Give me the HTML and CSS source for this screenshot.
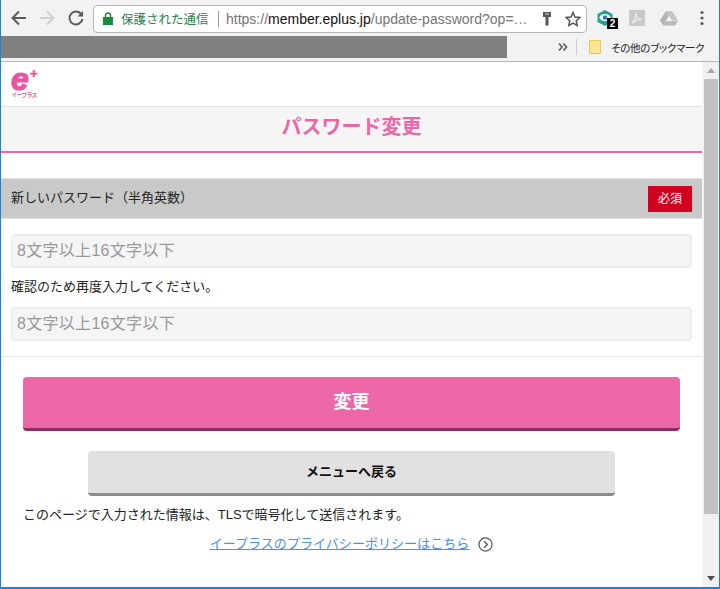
FILE: index.html
```html
<!DOCTYPE html>
<html lang="ja">
<head>
<meta charset="utf-8">
<title>パスワード変更</title>
<link rel="stylesheet" href="styles.css">
</head>
<body>
<div class="window">
  <div class="toolbar">
    <svg class="nav" width="18" height="18" viewBox="0 0 18 18"><path d="M16 9H3M9 2.500 2.500 9 9 15.500" fill="none" stroke="#5a5a5a" stroke-width="2"/></svg>
    <svg class="nav" width="18" height="18" viewBox="0 0 18 18"><path d="M2 9h13M9 2.500 15.500 9 9 15.500" fill="none" stroke="#cfcfcf" stroke-width="2"/></svg>
    <svg class="nav" width="18" height="18" viewBox="0 0 18 18"><path d="M14.300 5.200A6.500 6.500 0 1 0 15.400 10" fill="none" stroke="#5a5a5a" stroke-width="2"/><path d="M10.500 7.500H16V2z" fill="#5a5a5a"/></svg>
    <div class="omnibox">
      <svg class="lock" width="10" height="13" viewBox="0 0 10 13"><path d="M0 5h10v8H0z" fill="#1e8a3c"/><path d="M2.500 5.500V3.500a2.500 2.500 0 0 1 5 0v2" fill="none" stroke="#1e8a3c" stroke-width="1.500"/></svg>
      <span class="secure">保護された通信</span>
      <span class="sep"></span>
      <span class="url"><span class="url-dim">https://</span><span class="url-host">member.eplus.jp</span><span class="url-dim">/update-password?op=…</span></span>
      <svg class="key" width="10" height="16" viewBox="0 0 10 16"><path d="M1 1h8v5H6.500v8L5 15l-1.500-1V6H1z" fill="#555"/><path d="M3 3h4" stroke="#ddd"/></svg>
      <svg class="star" width="16" height="16" viewBox="0 0 16 16"><path d="M8 1.500l2 4.500 4.800.5-3.600 3.200 1 4.800L8 12.100l-4.200 2.400 1-4.800L1.200 6.500 6 6z" fill="none" stroke="#555" stroke-width="1.500"/></svg>
    </div>
    <div class="extensions">
      <div class="ext-eye">
        <svg width="18" height="18" viewBox="0 0 18 18"><path d="M9 1l7.500 4v8L9 17l-7.500-4V5z" fill="#21a58a"/><ellipse cx="9" cy="8.500" rx="5.500" ry="3.500" fill="#fff"/><circle cx="9" cy="8.500" r="2.200" fill="#2a7ab8"/></svg>
        <span class="badge">2</span>
      </div>
      <svg class="ext" width="16" height="16" viewBox="0 0 16 16"><path d="M0 0h16v16H0z" fill="#c9c9c9"/><path d="M3 13c3-2 4-6 3.500-10 .5 4 3 6.500 6.500 6.500-3.500 0-6.500 1-10 3.500z" fill="none" stroke="#f1f1f1" stroke-width="1.200"/></svg>
      <svg class="ext" width="18" height="16" viewBox="0 0 18 16"><path d="M6 1h6l6 9.500h-6z" fill="#c4c4c4"/><path d="M6 1 0 10.500l3 5 6-10z" fill="#b4b4b4"/><path d="M5.500 11H18l-3 4.500H3z" fill="#bababa"/></svg>
      <svg class="menu" width="4" height="16" viewBox="0 0 4 16"><circle cx="2" cy="2.500" r="1.600" fill="#5a5a5a"/><circle cx="2" cy="8" r="1.600" fill="#5a5a5a"/><circle cx="2" cy="13.500" r="1.600" fill="#5a5a5a"/></svg>
    </div>
  </div>
  <div class="bookmarks">
    <div class="redacted"></div>
    <svg class="chevrons" width="10" height="8" viewBox="0 0 10 8"><path d="M1 .500 4 4 1 7.500M5.500 .500 8.500 4 5.500 7.500" fill="none" stroke="#666" stroke-width="1.800"/></svg>
    <span class="bm-sep"></span>
    <svg class="folder" width="12" height="14" viewBox="0 0 12 14"><path d="M.500.500h11v13H.500z" fill="#fbe594" stroke="#edc94f"/></svg>
    <span class="bm-label">その他のブックマーク</span>
  </div>
  <div class="viewport">
    <main class="page">
      <header class="brand">
        <div class="logo"><div class="logo-mark"><span class="logo-e">e</span><span class="logo-plus">+</span></div><div class="logo-kana">イープラス</div></div>
      </header>
      <h1 class="title">パスワード変更</h1>
      <section class="form">
        <div class="field-head"><span class="field-label">新しいパスワード（半角英数）</span><span class="required">必須</span></div>
        <div class="fields">
          <input class="input" type="password" placeholder="8文字以上16文字以下">
          <p class="hint">確認のため再度入力してください。</p>
          <input class="input" type="password" placeholder="8文字以上16文字以下">
        </div>
      </section>
      <div class="actions">
        <button class="btn-primary" type="button">変更</button>
        <button class="btn-secondary" type="button">メニューへ戻る</button>
      </div>
      <p class="notice">このページで入力された情報は、TLSで暗号化して送信されます。</p>
      <p class="privacy"><a href="#">イープラスのプライバシーポリシーはこちら</a><svg class="arrow" width="15" height="15" viewBox="0 0 16 16"><circle cx="8" cy="8" r="7" fill="none" stroke="#555" stroke-width="1.300"/><path d="M6.500 4.500 10 8l-3.500 3.500" fill="none" stroke="#555" stroke-width="1.500"/></svg></p>
    </main>
    <div class="scrollbar">
      <span class="sb-up"></span>
      <div class="sb-track"><div class="sb-thumb"></div></div>
      <span class="sb-down"></span>
    </div>
  </div>
</div>
</body>
</html>
```
FILE: styles.css
```css
* { box-sizing: border-box; }
html, body { margin: 0; padding: 0; height: 589px; overflow: hidden; background: #fff; }
body { font-family: "Liberation Sans", "Noto Sans CJK JP", sans-serif; color: #222; }
.window { width: 720px; height: 589px; display: flex; flex-direction: column; border: solid #1585dc; border-width: 0 1px 2px 1px; }

.toolbar { height: 36px; background: #f2f2f2; display: flex; align-items: center; padding-left: 9px; flex: none; }
.nav { margin-right: 10px; flex: none; }
.nav:nth-child(2) { margin-right: 11px; }
.nav:nth-child(3) { margin-right: 8px; }
.omnibox { width: 494px; height: 28px; margin-top: 1px; background: #fff; border: 1px solid #b5b5b5; border-radius: 4px; display: flex; align-items: center; padding-left: 9px; font-size: 14px; white-space: nowrap; }
.lock { flex: none; margin-right: 8px; }
.secure { color: #2e7d4f; font-size: 12.500px; width: 87px; flex: none; }
.sep { width: 1px; height: 16px; background: #999; margin: 0 7px 0 10px; flex: none; }
.url { width: 312px; flex: none; overflow: hidden; font-size: 14px; }
.url-dim { color: #757575; }
.url-host { color: #111; }
.key { margin-left: 4px; flex: none; }
.star { margin-left: 13px; flex: none; }
.extensions { display: flex; align-items: center; margin-left: 9px; }
.ext-eye { position: relative; width: 18px; height: 18px; margin-right: 15px; }
.ext-eye svg { display: block; }
.badge { position: absolute; left: 11px; top: 9px; width: 11px; height: 11px; background: #000; color: #fff; font-size: 10px; font-weight: bold; line-height: 11px; text-align: center; }
.ext { margin-right: 15px; flex: none; }
.menu { margin-left: 7px; flex: none; }

.bookmarks { height: 26px; background: #f2f2f2; border-bottom: 1px solid #b8b8b8; display: flex; align-items: center; flex: none; padding-bottom: 3px; }
.redacted { width: 506px; height: 22px; background: #808080; margin-right: 51px; flex: none; align-self: flex-start; }
.chevrons { flex: none; margin-right: 8px; }
.bm-sep { width: 1px; height: 16px; background: #ccc; margin-right: 12px; flex: none; }
.folder { flex: none; margin-right: 10px; }
.bm-label { font-size: 10.500px; letter-spacing: -.3px; color: #222; white-space: nowrap; font-feature-settings: "palt"; }

.viewport { flex: 1; min-height: 0; display: flex; }
.page { flex: 1; min-width: 0; background: #fff; }
.brand { height: 45px; border-bottom: 1px solid #e3e3e3; padding: 6px 0 0 10px; }
.logo { width: 28px; color: #e8559f; font-weight: bold; }
.logo-mark { display: flex; align-items: flex-start; height: 23px; }
.logo-e { font-family: "Liberation Sans", sans-serif; font-style: italic; font-size: 32px; line-height: 23px; width: 19px; -webkit-text-stroke: 1.200px #e8559f; }
.logo-plus { font-size: 13px; line-height: 10px; margin-top: 1px; -webkit-text-stroke: .500px #e8559f; }
.logo-kana { font-size: 5.500px; line-height: 7px; margin: 1px 0 0 1px; white-space: nowrap; font-feature-settings: "palt"; }

.title { height: 46px; margin: 0; background: #f5f5f5; border-bottom: 2px solid #eb67a8; color: #eb67a8; font-size: 20px; font-weight: bold; line-height: 40px; text-align: center; }
.form { margin-top: 25px; border-bottom: 1px solid #e3e3e3; padding-bottom: 15px; }
.field-head { height: 41px; background: #c9c9c9; border: solid #e0e0e0; border-width: 1px 0; display: flex; align-items: center; justify-content: space-between; padding: 0 10px; font-size: 13px; color: #222; }
.field-label { margin-top: -4px; }
.required { width: 44px; height: 26px; background: #d0021f; color: #fff; font-size: 12px; line-height: 26px; text-align: center; }
.fields { padding: 15px 10px 0; }
.input { display: block; width: 100%; height: 34px; background: #f5f5f5; border: 2px solid #ededed; border-radius: 4px; padding: 0 4px; font: 16px "Liberation Sans", "Noto Sans CJK JP", sans-serif; outline: none; }
.input::placeholder { color: #999; opacity: 1; letter-spacing: .3px; }
.hint { margin: 9px 0 11px; font-size: 13px; line-height: 19px; color: #222; }

.actions { display: flex; flex-direction: column; align-items: center; padding-top: 20px; }
.btn-primary { display: block; width: 657px; height: 54px; background: #eb67a8; border: 0; border-bottom: 3px solid #8e2e5c; border-radius: 4px; color: #fff; font: bold 18px "Liberation Sans", "Noto Sans CJK JP", sans-serif; padding: 0 0 5px; }
.btn-secondary { display: block; width: 527px; height: 45px; margin-top: 20px; background: #e1e1e1; border: 0; border-bottom: 3px solid #8a8a8a; border-radius: 4px; color: #111; font: bold 13px "Liberation Sans", "Noto Sans CJK JP", sans-serif; padding: 0 0 4px; }
.notice { margin: 9px 0 0 22px; font-size: 13px; line-height: 20px; color: #222; }
.privacy { margin: 9px 0 0; display: flex; align-items: center; justify-content: center; font-size: 13.050px; line-height: 20px; gap: 9px; }
.privacy a { color: #4a8fe8; text-decoration: underline; }

.scrollbar { width: 17px; background: #f0f0f0; display: flex; flex-direction: column; align-items: center; border-left: 1px solid #fafafa; }
.sb-up, .sb-down { width: 0; height: 0; border: 4px solid transparent; flex: none; }
.sb-up { border-bottom: 5px solid #a6a6a6; border-top: 0; margin: 6px 0 6px; }
.sb-down { border-top: 5px solid #505050; border-bottom: 0; margin: 6px 0; }
.sb-track { flex: 1; width: 100%; padding: 0 1px; }
.sb-thumb { width: 14px; height: 435px; background: #c1c1c1; }
```
